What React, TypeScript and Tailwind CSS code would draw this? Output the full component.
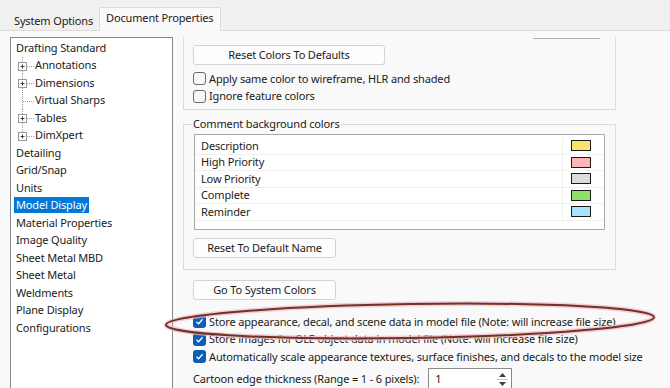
import React from 'react';

type Node = { label: string; child?: boolean; expand?: boolean; last?: boolean; selected?: boolean };

const tree: Node[] = [
  { label: 'Drafting Standard' },
  { label: 'Annotations', child: true, expand: true },
  { label: 'Dimensions', child: true, expand: true },
  { label: 'Virtual Sharps', child: true },
  { label: 'Tables', child: true, expand: true },
  { label: 'DimXpert', child: true, expand: true, last: true },
  { label: 'Detailing' },
  { label: 'Grid/Snap' },
  { label: 'Units' },
  { label: 'Model Display', selected: true },
  { label: 'Material Properties' },
  { label: 'Image Quality' },
  { label: 'Sheet Metal MBD' },
  { label: 'Sheet Metal' },
  { label: 'Weldments' },
  { label: 'Plane Display' },
  { label: 'Configurations' },
];

const comments = [
  { label: 'Description', color: 'bg-[#fde36b]' },
  { label: 'High Priority', color: 'bg-[#ffb4ba]' },
  { label: 'Low Priority', color: 'bg-[#dcdcdc]' },
  { label: 'Complete', color: 'bg-[#8fe066]' },
  { label: 'Reminder', color: 'bg-[#a9e4ff]' },
];

function TreeLines({ expand, last }: { expand?: boolean; last?: boolean }) {
  return (
    <svg width="24" height="17.5" viewBox="0 0 24 17.5" className="shrink-0">
      <line x1="11.5" y1="0" x2="11.5" y2={last ? 9 : 17.5} stroke="#a0a0a0" strokeDasharray="1 1" />
      <line x1="12" y1="9.5" x2="23" y2="9.5" stroke="#a0a0a0" strokeDasharray="1 1" />
      {expand && (
        <g>
          <rect x="7.5" y="5.5" width="8" height="8" fill="#fdfdfd" stroke="#9a9a9a" />
          <line x1="9.5" y1="9.5" x2="13.5" y2="9.5" stroke="#404040" />
          <line x1="11.5" y1="7.5" x2="11.5" y2="11.5" stroke="#404040" />
        </g>
      )}
    </svg>
  );
}

function Box({ checked }: { checked?: boolean }) {
  if (checked) {
    return (
      <span className="w-[13px] h-[13px] rounded-[3px] bg-[#0a5fb8] flex items-center justify-center shrink-0">
        <svg width="9" height="9" viewBox="0 0 9 9">
          <path d="M1.5 4.8 L3.6 6.8 L7.6 2.2" fill="none" stroke="white" strokeWidth="1.3" />
        </svg>
      </span>
    );
  }
  return <span className="w-[13px] h-[13px] rounded-[3px] border border-[#6a6a6a] bg-[#f7f7f7] shrink-0" />;
}

function Check({ label, checked }: { label: string; checked?: boolean }) {
  return (
    <div className="flex items-center gap-[3px] h-[17.5px]">
      <Box checked={checked} />
      <span className="whitespace-nowrap">{label}</span>
    </div>
  );
}

function Btn({ label, w }: { label: string; w: string }) {
  return (
    <div className={`${w} h-[20px] flex items-center justify-center bg-[#fdfdfd] border border-[#d3d3d3] rounded-[3px] whitespace-nowrap`}>
      {label}
    </div>
  );
}

export default function App() {
  return (
    <div className="relative w-[670px] h-[388px] overflow-hidden bg-[#f9f9f9] text-[#1b1b1b] text-[11px] tracking-[-0.15px] font-['Noto_Sans',sans-serif]">
      {/* tab strip */}
      <div className="h-[31px] bg-[#f0f0f0] border-b border-[#dcdcdc] flex items-end pl-[10px]">
        <div className="h-[20px] px-[4px] flex items-center mb-[-1px]">System Options</div>
        <div className="h-[24px] ml-[2px] px-[6px] pb-[2px] flex items-center bg-[#f9f9f9] border border-b-0 border-[#dcdcdc] mb-[-1px]">
          Document Properties
        </div>
      </div>

      <div className="flex pl-[10px] pt-[6px] gap-[10px]">
        {/* tree */}
        <div className="w-[163px] h-[360px] bg-white border border-[#828790] pt-[1px] shrink-0">
          {tree.map((n) => (
            <div key={n.label} className="h-[17.5px] flex items-center">
              {n.child ? (
                <>
                  <TreeLines expand={n.expand} last={n.last} />
                  <span className="whitespace-nowrap">{n.label}</span>
                </>
              ) : (
                <span
                  className={`ml-[3px] px-[2px] whitespace-nowrap leading-[16px] ${n.selected ? 'bg-[#0078d7] text-white' : ''}`}
                >
                  {n.label}
                </span>
              )}
            </div>
          ))}
        </div>

        {/* right side */}
        <div className="w-[433px] flex flex-col">
          <div className="h-[73px] border-x border-b border-[#dcdcdc] pl-[9px] flex flex-col">
            <div className="flex justify-end pr-[15px] pt-[1px]">
              <div className="w-[67px] h-[1px] bg-[#b0b0b0]" />
            </div>
            <div className="mt-[6px]">
              <Btn label="Reset Colors To Defaults" w="w-[192px]" />
            </div>
            <div className="mt-[5px]">
              <Check label="Apply same color to wireframe, HLR and shaded" />
              <Check label="Ignore feature colors" />
            </div>
          </div>

          <fieldset className="mt-[7px] h-[153px] border border-[#dcdcdc] px-[10px] pb-[6px]">
            <legend className="ml-[-2px] px-[1px] leading-[14px]">Comment background colors</legend>
            <div className="h-[96px] mt-[3px] bg-white border border-[#a8a8a8] pt-[3px]">
              {comments.map((c) => (
                <div key={c.label} className="h-[16.5px] flex border-b border-[#f0f0f0]">
                  <div className="flex-1 flex items-center pl-[6px] border-r border-[#f0f0f0]">{c.label}</div>
                  <div className="w-[41px] flex items-center pl-[8px]">
                    <span className={`w-[20px] h-[11px] border border-[#1a1a1a] ${c.color}`} />
                  </div>
                </div>
              ))}
            </div>
            <div className="mt-[8px] ml-[-1px]">
              <Btn label="Reset To Default Name" w="w-[143px]" />
            </div>
          </fieldset>

          <div className="pl-[10px] mt-[10px]">
            <Btn label="Go To System Colors" w="w-[143px]" />
          </div>

          <div className="pl-[10px] mt-[13px]">
            <Check checked label="Store appearance, decal, and scene data in model file (Note: will increase file size)" />
            <Check checked label="Store images for OLE object data in model file (Note: will increase file size)" />
            <Check checked label="Automatically scale appearance textures, surface finishes, and decals to the model size" />
            <div className="flex items-center mt-[3px] h-[21px]">
              <span className="whitespace-nowrap">Cartoon edge thickness (Range = 1 - 6 pixels):</span>
              <div className="ml-[9px] w-[84px] h-[22px] bg-white border border-[#8a8a8a] flex items-center">
                <span className="pl-[6px] flex-1">1</span>
                <div className="w-[13px] h-full flex flex-col items-center justify-center gap-[2px] mr-[2px]">
                  <svg width="7" height="4" viewBox="0 0 7 4"><path d="M0 4 L3.5 0 L7 4 Z" fill="#404040" /></svg>
                  <div className="w-[11px] h-px bg-[#c8c8c8]" />
                  <svg width="7" height="4" viewBox="0 0 7 4"><path d="M0 0 L3.5 4 L7 0 Z" fill="#404040" /></svg>
                </div>
              </div>
            </div>
          </div>
        </div>
      </div>

      {/* hand-drawn annotation oval */}
      <svg className="absolute left-[160px] top-[298px] pointer-events-none" width="505" height="48" viewBox="0 0 505 48">
        <g transform="rotate(-0.9 252 24)">
          <ellipse cx="250" cy="23" rx="244" ry="17" fill="none" stroke="#f3b8c9" strokeWidth="5" opacity="0.7" />
          <ellipse cx="250" cy="23" rx="244" ry="17" fill="none" stroke="#6e3424" strokeWidth="2" />
        </g>
      </svg>
    </div>
  );
}
